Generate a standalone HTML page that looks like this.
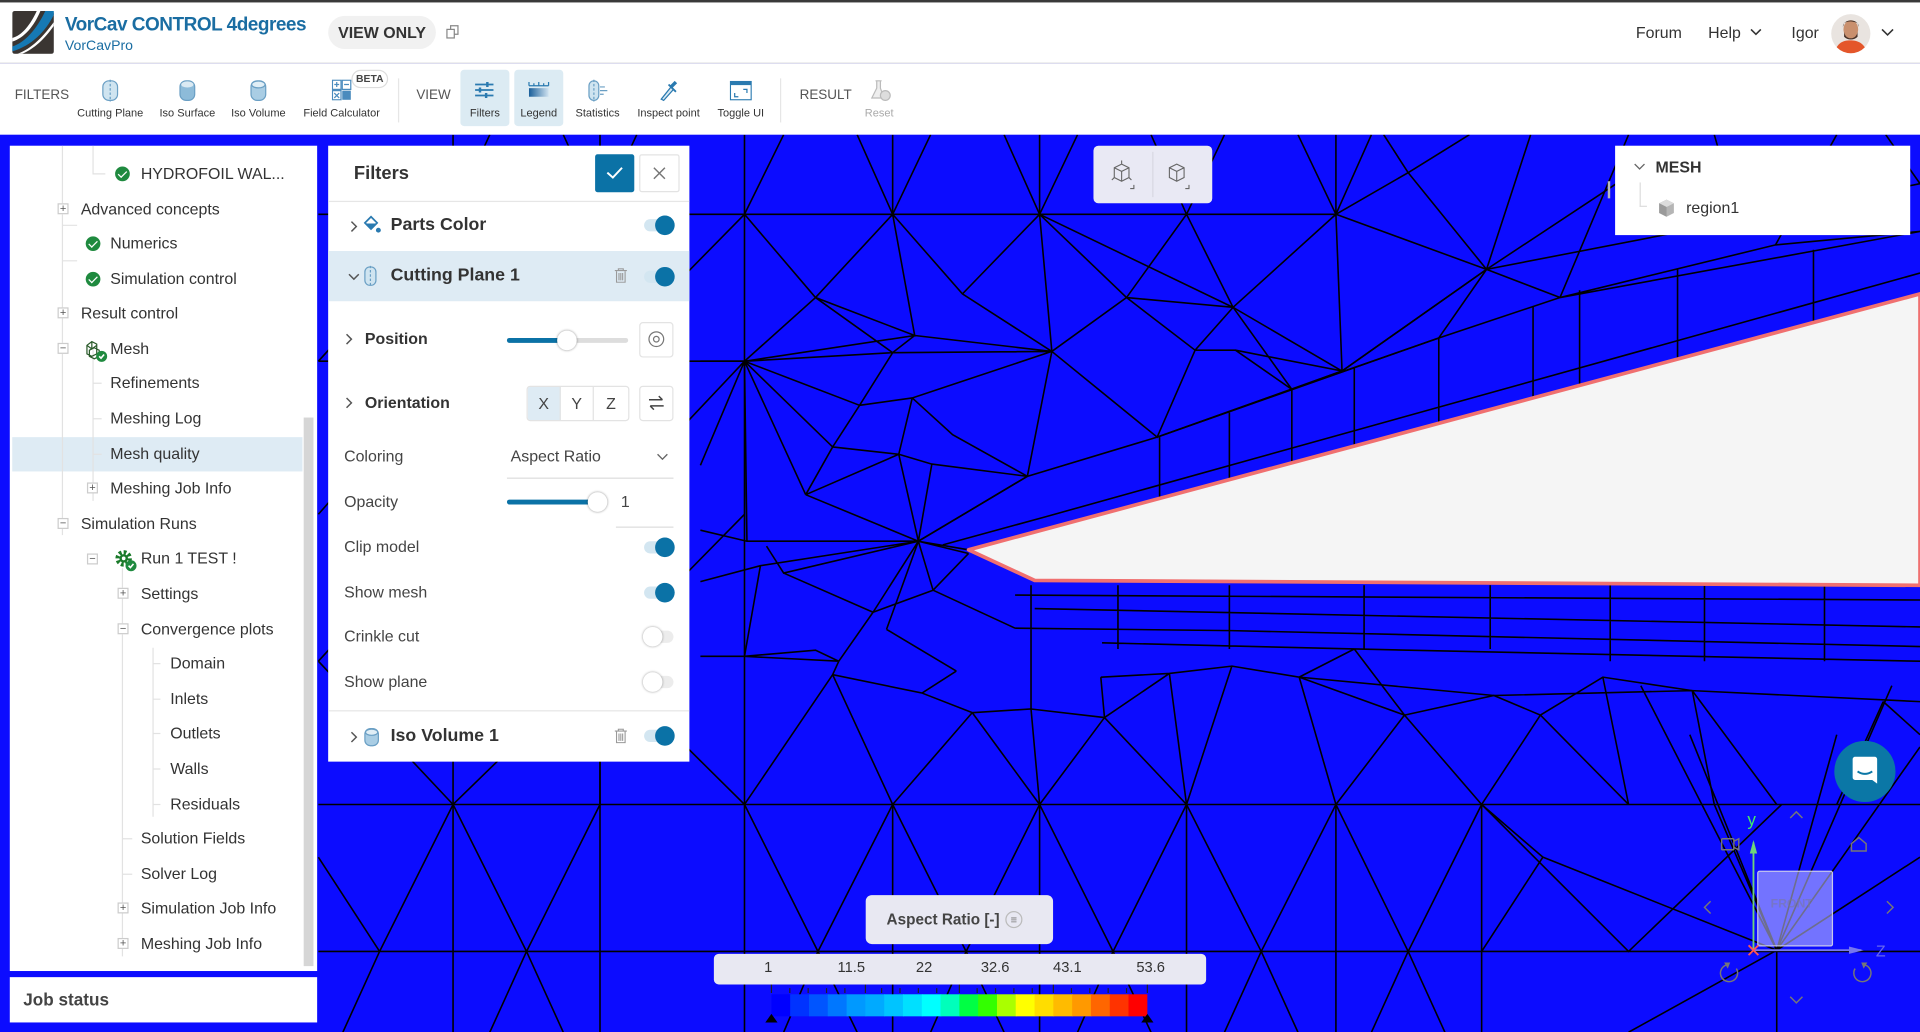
<!DOCTYPE html>
<html><head><meta charset="utf-8">
<style>
*{box-sizing:border-box;margin:0;padding:0}
html,body{width:1920px;height:1032px;overflow:hidden;background:#0c0cff;font-family:"Liberation Sans",sans-serif;color:#333}
#root{position:absolute;left:0;top:0;width:1568px;height:843px;transform:scale(1.22449);transform-origin:0 0;background:#0c0cff;overflow:hidden}
.abs{position:absolute}
.hdr{left:0;top:0;width:1568px;height:52px;background:#fff;border-top:2px solid #3a3a3a;border-bottom:1px solid #e2e2e2}
.tb{left:0;top:52px;width:1568px;height:58px;background:#fff}
.tl{position:absolute;font-size:9px;color:#333;text-align:center;white-space:nowrap;transform:translateX(-50%)}
.sec{position:absolute;font-size:11px;color:#555;top:20px}
.panel{background:#fff}
.tr{position:absolute;font-size:13px;color:#333;white-space:nowrap;line-height:16px}
.pl{position:absolute;width:9px;height:9px;border:1px solid #ccc;font-size:9px;line-height:7px;text-align:center;color:#555;background:#fff}
.chk{position:absolute;width:12px;height:12px;border-radius:50%;background:#1f8a3f}
.chk:after{content:"";position:absolute;left:3.5px;top:2px;width:3px;height:6px;border:solid #fff;border-width:0 1.6px 1.6px 0;transform:rotate(45deg)}
.fl{position:absolute;font-size:13px;color:#444;white-space:nowrap}
.fb{position:absolute;font-size:13px;font-weight:bold;color:#333;white-space:nowrap}
.tg{position:absolute;width:26px;height:20px}
.tg .t{position:absolute;left:1px;top:5px;width:24px;height:10px;border-radius:5px;background:#d3e6f1}
.tg .k{position:absolute;left:10px;top:2px;width:16px;height:16px;border-radius:50%;background:#0b72a6}
.tg.off .t{background:#ececec}
.tg.off .k{left:0;background:#fff;box-shadow:0 0 2px rgba(0,0,0,.4)}
.sep{position:absolute;top:12px;width:1px;height:36px;background:#e6e6e6}
</style></head><body><div id="root">

<svg class="abs" style="left:0;top:0" width="1568" height="843" viewBox="0 0 1568 843">
<rect x="0" y="110" width="1568" height="733" fill="#0c0cff"/>
<g stroke="#000" stroke-width="1.3" fill="none">
<path d="M260 175H1091M260 657H1568M260 777H1568"/>
<path d="M608 110V843M729 110V175M849 110V175M1091 110V175M729 657V843M849 657V843M969 657V843M1091 657V843M1210 657V843M370 110V843M490 110V843"/>
<path d="M608 175L640 110M729 175L700 110M729 175L760 110M849 175L820 110M849 175L880 110M1091 175L1060 110M1091 175L1120 110M969 175L940 110M969 175L1000 110M490 175L520 110M370 175L400 110M490 175L460 110"/>
<path d="M608 657L668 777L729 657L789 777L849 657L909 777L969 657L1030 777L1091 657L1150 777L1210 657L1330 777L1455 657M490 657L430 777L370 657L310 777L260 700M668 777L640 843M668 777L700 843M789 777L760 843M789 777L820 843M909 777L880 843M909 777L940 843M1030 777L1000 843M1030 777L1060 843M1150 777L1120 843M1150 777L1180 843M430 777L400 843M430 777L460 843M310 777L280 843"/>
<path d="M260 295L370 175L490 295L608 175M260 295H608M370 175V295M260 420L370 295L490 420L608 295M260 540L370 420L490 540L608 420M370 657L490 540L608 657M260 540L370 657M490 540V657"/>
<path d="M572 295H608L666 243L729 175M608 175L666 243L747 274L729 175L786 240L859 287L849 175L786 240M608 295L729 288L747 274M608 295L747 274M608 295L702 331L729 288L859 287L747 274M608 295L680 365M608 295L658 404M608 295L610 442M608 295L572 380M849 175L920 243L859 287M849 175L1007 251L969 175L920 243L1007 251L1091 175L1096 303L1007 251L976 286L920 243M976 286L1009 286L1055 318M976 286L945 357L859 287L839 389M859 287L745 325L702 331M666 243L729 288"/>
<path d="M745 325L778 355L839 389M745 325L734 371L680 365L702 331M734 371L761 379L839 389M658 404L734 371M658 404L750 442M680 365L658 404M572 433L610 442L750 442M734 371L750 442M761 379L750 442M839 389L750 442M572 475L621 462L750 442M626 446L640 468L750 442M640 468L713 500M621 462L608 536M750 442L713 500M750 442L724 514M750 442L762 482L713 500M762 482L829 513M713 500L685 540L608 536L666 531L685 540M724 514L781 548M685 540L680 551L753 566L781 548M753 566L794 582M680 551L608 657M680 551L729 657M794 582L729 657M794 582L842 579L849 657M794 582L849 657M842 579L902 586L849 657M902 586L969 657M572 536H608M750 442L791 449M750 442L791 452M762 482L791 452M1009 286L1096 303L1055 318L945 357M1091 175L1150 141L1214 220L1096 303M1150 141L1130 110M1150 141L1200 110M1214 220L1250 110M1214 220L1320 150M1274 243L1330 110M1274 243L1214 220M1175 276L1214 220M1055 318L1175 276M1091 175L1214 220M1007 251L1055 318"/>
<path d="M770 445L854 422L1568 223M750 442L839 389L945 357L1175 276L1274 243L1568 189M945 357L1096 303L1214 220L1420 180L1568 150M1274 243L1450 200L1568 189M1450 200L1500 110M1420 180L1400 110M1568 150L1540 110"/>
<path d="M947 426L947 357M1004 411L1004 337M1055 397L1055 318M1106 383L1106 300M1175 365L1175 276M1252 344L1252 250M1290 334L1290 237M1481 282L1481 204M1370 314L1370 220"/>
<path d="M829 486L1568 490M845 497L1568 512M829 513L1006 515L1568 528M900 525L1106 530L1568 540M1061 553L1220 568L1382 564L1568 573M913 478V530M1004 478V530M1114 478V530M1217 478V530M1315 478V540M1392 478V540M1490 478V540M842 478V579"/>
<path d="M899 553L955 550L1006 544L1061 553L1106 530M899 553L902 586L955 550M955 550L969 657M1006 544L1061 553L1147 584L1106 530M1147 584L1220 568L1258 584L1309 553L1382 564M1258 584L1210 657M1147 584L1210 657M1061 553L1091 657M1147 584L1091 657M1006 544L969 657M1309 553L1330 657M1258 584L1330 657M1382 564L1400 657M1538 573L1568 600M1538 573L1500 657M1382 564L1451 657"/>
<path d="M1451 776L1400 657M1451 776L1380 600M1451 776L1340 560M1451 776L1500 600M1451 776L1545 560M1451 776L1568 610M1451 776L1260 700M1451 776L1451 843M1451 776L1330 843M1451 776L1568 700M1260 700L1210 657M1260 700L1210 777"/>
</g>
<path d="M791 449L1568 240L1568 478L845 474Z" fill="#f5f5f5" stroke="#f07070" stroke-width="3" stroke-linejoin="round"/>
</svg>

<div class="abs hdr">
  <svg class="abs" style="left:10px;top:7px" width="34" height="35" viewBox="0 0 34 35">
    <rect width="34" height="35" rx="2" fill="#3a3532"/>
    <path d="M0 29C10 26 20 15 27 0H34V3C27 17 16 28 0 33Z" fill="#1679b4"/>
    <path d="M0 22C8 20 15 11 20 0H23C18 12 10 22 0 25Z" fill="#fff"/>
    <path d="M4 35C16 31 26 20 34 9V12C27 22 18 31 8 35Z" fill="#fff"/>
  </svg>
  <div class="abs" style="left:53px;top:10px;font-size:15.5px;letter-spacing:-0.4px;font-weight:bold;color:#1a6da2;white-space:nowrap">VorCav CONTROL 4degrees</div>
  <div class="abs" style="left:53px;top:30px;font-size:11.5px;color:#1a6da2">VorCavPro</div>
  <div class="abs" style="left:268px;top:11px;width:88px;height:27px;border-radius:14px;background:#f1f1f1;font-size:13px;font-weight:bold;color:#333;text-align:center;line-height:27px">VIEW ONLY</div>
  <svg class="abs" style="left:364px;top:18px" width="12" height="12" viewBox="0 0 12 12" fill="none" stroke="#888" stroke-width="1"><rect x="1" y="4" width="6" height="7"/><path d="M4 4V1H10V8H7"/></svg>
  <div class="abs" style="left:1336px;top:17px;font-size:13px;color:#333">Forum</div>
  <div class="abs" style="left:1395px;top:17px;font-size:13px;color:#333">Help</div>
  <svg class="abs" style="left:1429px;top:21px" width="10" height="7"><path d="M1 1L5 5L9 1" stroke="#333" stroke-width="1.3" fill="none"/></svg>
  <div class="abs" style="left:1463px;top:17px;font-size:13px;color:#333">Igor</div>
  <svg class="abs" style="left:1495px;top:9px" width="33" height="33" viewBox="0 0 33 33"><defs><clipPath id="cp"><circle cx="16.5" cy="16.5" r="16"/></clipPath></defs><g clip-path="url(#cp)"><rect width="33" height="33" fill="#e9e4e0"/><path d="M3 33C5 24 10 22 16 22S28 24 30 33Z" fill="#e4562a"/><ellipse cx="16.5" cy="13" rx="6" ry="7.5" fill="#c9906e"/><path d="M10 11C10 4 23 4 23 11L22 8C18 6 14 6 11 8Z" fill="#3b2a22"/><path d="M11 15C12 22 21 22 22 15L22 19C19 22 14 22 11 19Z" fill="#4a3328"/></g></svg>
  <svg class="abs" style="left:1536px;top:21px" width="11" height="7"><path d="M1 1L5.5 5.5L10 1" stroke="#333" stroke-width="1.3" fill="none"/></svg>
</div>

<div class="abs tb">
  <div class="sec" style="left:12px">FILTERS</div>
  <svg class="abs" style="left:82px;top:13px" width="16" height="18" viewBox="0 0 16 18"><rect x="2" y="1" width="12" height="16" rx="5" fill="#cfe4f0" stroke="#6a9fc4"/><path d="M8 0V18" stroke="#6a9fc4" stroke-dasharray="2 1.5"/></svg>
  <div class="tl" style="left:90px;top:35px">Cutting Plane</div>
  <svg class="abs" style="left:145px;top:13px" width="16" height="18" viewBox="0 0 16 18"><rect x="2" y="1" width="12" height="16" rx="5" fill="#8dbbd9" stroke="#6a9fc4"/><ellipse cx="8" cy="4" rx="5" ry="2.5" fill="#dbeaf3"/></svg>
  <div class="tl" style="left:153px;top:35px">Iso Surface</div>
  <svg class="abs" style="left:203px;top:13px" width="16" height="18" viewBox="0 0 16 18"><rect x="2" y="1" width="12" height="16" rx="5" fill="#a9cde4" stroke="#6a9fc4"/><ellipse cx="8" cy="4" rx="5.5" ry="2.8" fill="#e0eef6" stroke="#6a9fc4"/></svg>
  <div class="tl" style="left:211px;top:35px">Iso Volume</div>
  <svg class="abs" style="left:271px;top:13px" width="16" height="17" viewBox="0 0 16 17"><rect x="0.5" y="0.5" width="7" height="7.5" fill="#fff" stroke="#4a8bbd"/><rect x="8.5" y="0.5" width="7" height="7.5" fill="#fff" stroke="#4a8bbd"/><rect x="0.5" y="9" width="7" height="7.5" fill="#fff" stroke="#4a8bbd"/><rect x="8.5" y="9" width="7" height="7.5" fill="#4a8bbd"/><path d="M2 4H6M4 2V6M10 4H14M2 11L6 15M6 11L2 15" stroke="#4a8bbd"/></svg>
  <div class="abs" style="left:287px;top:5px;width:30px;height:15px;border:1px solid #ddd;border-radius:8px;background:#fff;font-size:8.5px;font-weight:bold;color:#444;text-align:center;line-height:13px">BETA</div>
  <div class="tl" style="left:279px;top:35px">Field Calculator</div>
  <div class="sep" style="left:325px"></div>
  <div class="sec" style="left:340px">VIEW</div>
  <div class="abs" style="left:376px;top:5px;width:40px;height:46px;background:#dcebf3;border-radius:3px"></div>
  <svg class="abs" style="left:387px;top:14px" width="17" height="15" viewBox="0 0 17 15" stroke="#2a7ab0" stroke-width="1.5"><path d="M1 3H16M1 7.5H16M1 12H16"/><path d="M11 1V5M5 5.5V9.5M10 10V14" stroke-width="2"/></svg>
  <div class="tl" style="left:396px;top:35px">Filters</div>
  <div class="abs" style="left:420px;top:5px;width:40px;height:46px;background:#dcebf3;border-radius:3px"></div>
  <svg class="abs" style="left:431px;top:14px" width="18" height="14" viewBox="0 0 18 14"><path d="M1 1V4M5 2V4M9 1V4M13 2V4M17 1V4M1 4H17" stroke="#2a7ab0" stroke-width="1"/><rect x="1" y="6" width="16" height="7" fill="url(#lg1)"/><defs><linearGradient id="lg1"><stop offset="0" stop-color="#1a5f9a"/><stop offset="1" stop-color="#cfe2f0"/></linearGradient></defs></svg>
  <div class="tl" style="left:440px;top:35px">Legend</div>
  <svg class="abs" style="left:480px;top:13px" width="17" height="18" viewBox="0 0 17 18"><rect x="1" y="1" width="8" height="16" rx="4" fill="#cfe4f0" stroke="#6a9fc4"/><path d="M5 0V18" stroke="#6a9fc4" stroke-dasharray="2 1.5"/><path d="M10 6H14M10 9H16M10 12H13" stroke="#6a9fc4"/></svg>
  <div class="tl" style="left:488px;top:35px">Statistics</div>
  <svg class="abs" style="left:538px;top:13px" width="16" height="18" viewBox="0 0 16 18"><path d="M2 16L10 6L12 8L4 17Z" fill="#dbeaf3" stroke="#2a7ab0"/><path d="M9 5L13 1L15 3L11 7Z" fill="#2a7ab0"/><path d="M8 4L14 10" stroke="#2a7ab0" stroke-width="1.5"/></svg>
  <div class="tl" style="left:546px;top:35px">Inspect point</div>
  <svg class="abs" style="left:596px;top:14px" width="18" height="16" viewBox="0 0 18 16"><rect x="0.5" y="0.5" width="17" height="15" fill="#fff" stroke="#2a7ab0"/><rect x="0.5" y="0.5" width="17" height="3" fill="#2a7ab0"/><path d="M4 10V13H7M14 10V7H11" stroke="#2a7ab0" fill="none"/></svg>
  <div class="tl" style="left:605px;top:35px">Toggle UI</div>
  <div class="sep" style="left:637px"></div>
  <div class="sec" style="left:653px">RESULT</div>
  <svg class="abs" style="left:710px;top:13px" width="18" height="18" viewBox="0 0 18 18"><path d="M5 1H10M6 1V7L2 15H12L9 7V1" fill="#eee" stroke="#bbb"/><circle cx="13" cy="13" r="4" fill="#ddd" stroke="#bbb"/></svg>
  <div class="tl" style="left:718px;top:35px;color:#aaa">Reset</div>
</div>

<div class="abs panel" style="left:8px;top:119px;width:251px;height:674px">
  <div class="abs" style="left:2px;top:238px;width:237px;height:28px;background:#deebf4"></div>
  <div class="abs" style="left:240px;top:222px;width:8px;height:448px;background:#d6d6d6"></div>
  <svg class="abs" style="left:0;top:0" width="240" height="674"><g stroke="#e2e2e2" stroke-width="1" fill="none">
    <path d="M43 0V318M68 0V23H78M68 166V290M68 194H75M68 223H75M68 252H75M92 345V662M92 480V662M117 410V548M117 423H123M117 452H123M117 480H123M117 509H123M117 538H123M92 566H100M92 595H100M43 65H55M43 94H55"/>
  </g></svg>
  <div class="chk" style="left:86px;top:17px"></div><div class="tr" style="left:107px;top:15px">HYDROFOIL WAL...</div>
  <div class="pl" style="left:39px;top:47px">+</div><div class="tr" style="left:58px;top:44px">Advanced concepts</div>
  <div class="chk" style="left:62px;top:74px"></div><div class="tr" style="left:82px;top:72px">Numerics</div>
  <div class="chk" style="left:62px;top:103px"></div><div class="tr" style="left:82px;top:101px">Simulation control</div>
  <div class="pl" style="left:39px;top:132px">+</div><div class="tr" style="left:58px;top:129px">Result control</div>
  <div class="pl" style="left:39px;top:161px">−</div>
  <svg class="abs" style="left:60px;top:157px" width="20" height="20" viewBox="0 0 20 20"><path d="M3 6L7 3L11 5V13L7 15L3 13ZM7 3V9M3 6L7 9L11 6M5 10L9 8L13 10V15L9 17L5 15Z" stroke="#2a5a2a" fill="none" stroke-width="1"/><circle cx="15" cy="15" r="4.5" fill="#1f8a3f"/><path d="M13 15L14.5 16.5L17 13.5" stroke="#fff" stroke-width="1.3" fill="none"/></svg>
  <div class="tr" style="left:82px;top:158px">Mesh</div>
  <div class="tr" style="left:82px;top:186px">Refinements</div>
  <div class="tr" style="left:82px;top:215px">Meshing Log</div>
  <div class="tr" style="left:82px;top:244px">Mesh quality</div>
  <div class="pl" style="left:63px;top:275px">+</div><div class="tr" style="left:82px;top:272px">Meshing Job Info</div>
  <div class="pl" style="left:39px;top:304px">−</div><div class="tr" style="left:58px;top:301px">Simulation Runs</div>
  <div class="pl" style="left:63px;top:333px">−</div>
  <svg class="abs" style="left:84px;top:328px" width="20" height="20" viewBox="0 0 20 20"><circle cx="9" cy="9" r="5" fill="none" stroke="#1a7a2a" stroke-width="3.5" stroke-dasharray="2.2 1.7"/><circle cx="9" cy="9" r="3.5" fill="#1a7a2a"/><circle cx="9" cy="9" r="1.5" fill="#fff"/><circle cx="15" cy="15" r="4.5" fill="#1f8a3f"/><path d="M13 15L14.5 16.5L17 13.5" stroke="#fff" stroke-width="1.3" fill="none"/></svg>
  <div class="tr" style="left:107px;top:329px">Run 1 TEST !</div>
  <div class="pl" style="left:88px;top:361px">+</div><div class="tr" style="left:107px;top:358px">Settings</div>
  <div class="pl" style="left:88px;top:390px">−</div><div class="tr" style="left:107px;top:387px">Convergence plots</div>
  <div class="tr" style="left:131px;top:415px">Domain</div>
  <div class="tr" style="left:131px;top:444px">Inlets</div>
  <div class="tr" style="left:131px;top:472px">Outlets</div>
  <div class="tr" style="left:131px;top:501px">Walls</div>
  <div class="tr" style="left:131px;top:530px">Residuals</div>
  <div class="tr" style="left:107px;top:558px">Solution Fields</div>
  <div class="tr" style="left:107px;top:587px">Solver Log</div>
  <div class="pl" style="left:88px;top:618px">+</div><div class="tr" style="left:107px;top:615px">Simulation Job Info</div>
  <div class="pl" style="left:88px;top:647px">+</div><div class="tr" style="left:107px;top:644px">Meshing Job Info</div>
</div>
<div class="abs panel" style="left:8px;top:798px;width:251px;height:37px">
  <div class="abs" style="left:11px;top:10px;font-size:14px;font-weight:bold;color:#444">Job status</div>
</div>

<div class="abs panel" style="left:268px;top:119px;width:295px;height:503px">
  <div class="abs" style="left:21px;top:14px;font-size:15px;font-weight:bold;color:#333">Filters</div>
  <div class="abs" style="left:218px;top:7px;width:32px;height:31px;background:#0b72a6;border-radius:2px"></div>
  <svg class="abs" style="left:226px;top:15px" width="16" height="14"><path d="M2 7L6.5 11L14 3" stroke="#fff" stroke-width="1.6" fill="none"/></svg>
  <div class="abs" style="left:254px;top:7px;width:33px;height:31px;border:1px solid #e3e3e3;border-radius:2px"></div>
  <svg class="abs" style="left:265px;top:17px" width="11" height="11"><path d="M1 1L10 10M10 1L1 10" stroke="#777" stroke-width="1.2"/></svg>
  <div class="abs" style="left:0;top:45px;width:295px;height:1px;background:#e6e6e6"></div>
  <svg class="abs" style="left:18px;top:61px" width="6" height="10"><path d="M1 1L5 5L1 9" stroke="#555" stroke-width="1.2" fill="none"/></svg>
  <svg class="abs" style="left:28px;top:57px" width="16" height="16" viewBox="0 0 16 16"><path d="M2 6L7 1L12 6L7 11Z" fill="#fff" stroke="#2a7ab0" stroke-width="1.4"/><path d="M2.5 6.5H11.5L7 11Z" fill="#2a7ab0"/><circle cx="13" cy="12" r="2" fill="#2a7ab0"/></svg>
  <div class="fb" style="left:51px;top:57px;font-size:14.5px">Parts Color</div>
  <div class="tg" style="left:257px;top:55px"><div class="t"></div><div class="k"></div></div>
  <div class="abs" style="left:0;top:86px;width:295px;height:41px;background:#deebf4"></div>
  <svg class="abs" style="left:16px;top:104px" width="10" height="6"><path d="M1 1L5 5L9 1" stroke="#555" stroke-width="1.2" fill="none"/></svg>
  <svg class="abs" style="left:29px;top:98px" width="11" height="17" viewBox="0 0 11 17"><rect x="1" y="1" width="9" height="15" rx="4" fill="#cfe4f0" stroke="#6a9fc4"/><path d="M5.5 0V17" stroke="#6a9fc4" stroke-dasharray="2 1.5"/></svg>
  <div class="fb" style="left:51px;top:98px;font-size:14.5px">Cutting Plane 1</div>
  <svg class="abs" style="left:234px;top:100px" width="10" height="12" viewBox="0 0 10 12"><path d="M0 2H10M3 2V0.5H7V2M1.5 2.5V11.5H8.5V2.5M3.5 4V10M5 4V10M6.5 4V10" stroke="#999" fill="none" stroke-width="0.9"/></svg>
  <div class="tg" style="left:257px;top:97px"><div class="t"></div><div class="k"></div></div>

  <svg class="abs" style="left:14px;top:153px" width="6" height="10"><path d="M1 1L5 5L1 9" stroke="#555" stroke-width="1.2" fill="none"/></svg>
  <div class="fb" style="left:30px;top:150px">Position</div>
  <div class="abs" style="left:146px;top:157px;width:99px;height:4px;background:#ddd;border-radius:2px"></div>
  <div class="abs" style="left:146px;top:157px;width:49px;height:4px;background:#0b72a6;border-radius:2px"></div>
  <div class="abs" style="left:187px;top:151px;width:16px;height:16px;border-radius:50%;background:#fff;box-shadow:0 0 2px rgba(0,0,0,.45)"></div>
  <div class="abs" style="left:254px;top:144px;width:28px;height:29px;border:1px solid #e3e3e3;border-radius:3px"></div>
  <svg class="abs" style="left:261px;top:151px" width="14" height="14"><circle cx="7" cy="7" r="6" stroke="#777" fill="none"/><circle cx="7" cy="7" r="2.3" stroke="#777" fill="none"/></svg>

  <svg class="abs" style="left:14px;top:205px" width="6" height="10"><path d="M1 1L5 5L1 9" stroke="#555" stroke-width="1.2" fill="none"/></svg>
  <div class="fb" style="left:30px;top:202px">Orientation</div>
  <div class="abs" style="left:162px;top:196px;width:84px;height:29px;border:1px solid #e3e3e3;border-radius:3px;overflow:hidden;font-size:13px;color:#444">
    <div class="abs" style="left:0;top:0;width:27px;height:27px;background:#deebf4;border-right:1px solid #e3e3e3;text-align:center;line-height:27px">X</div>
    <div class="abs" style="left:27px;top:0;width:27px;height:27px;border-right:1px solid #e3e3e3;text-align:center;line-height:27px">Y</div>
    <div class="abs" style="left:54px;top:0;width:28px;height:27px;text-align:center;line-height:27px">Z</div>
  </div>
  <div class="abs" style="left:254px;top:196px;width:28px;height:29px;border:1px solid #e3e3e3;border-radius:3px"></div>
  <svg class="abs" style="left:261px;top:203px" width="14" height="14"><path d="M1 4.5H12M9 1.5L12 4.5M13 9.5H2M5 12.5L2 9.5" stroke="#444" stroke-width="1.2" fill="none"/></svg>

  <div class="fl" style="left:13px;top:246px">Coloring</div>
  <div class="fl" style="left:149px;top:246px">Aspect Ratio</div>
  <svg class="abs" style="left:268px;top:251px" width="10" height="6"><path d="M1 1L5 5L9 1" stroke="#666" stroke-width="1.1" fill="none"/></svg>
  <div class="abs" style="left:146px;top:271px;width:136px;height:1px;background:#ddd"></div>
  <div class="fl" style="left:13px;top:283px">Opacity</div>
  <div class="abs" style="left:146px;top:289px;width:74px;height:4px;background:#0b72a6;border-radius:2px"></div>
  <div class="abs" style="left:212px;top:283px;width:16px;height:16px;border-radius:50%;background:#fff;box-shadow:0 0 2px rgba(0,0,0,.45)"></div>
  <div class="fl" style="left:239px;top:283px">1</div>
  <div class="abs" style="left:235px;top:311px;width:47px;height:1px;background:#ddd"></div>
  <div class="fl" style="left:13px;top:320px">Clip model</div>
  <div class="tg" style="left:257px;top:318px"><div class="t"></div><div class="k"></div></div>
  <div class="fl" style="left:13px;top:357px">Show mesh</div>
  <div class="tg" style="left:257px;top:355px"><div class="t"></div><div class="k"></div></div>
  <div class="fl" style="left:13px;top:393px">Crinkle cut</div>
  <div class="tg off" style="left:257px;top:391px"><div class="t"></div><div class="k"></div></div>
  <div class="fl" style="left:13px;top:430px">Show plane</div>
  <div class="tg off" style="left:257px;top:428px"><div class="t"></div><div class="k"></div></div>
  <div class="abs" style="left:0;top:461px;width:295px;height:1px;background:#e6e6e6"></div>
  <svg class="abs" style="left:18px;top:478px" width="6" height="10"><path d="M1 1L5 5L1 9" stroke="#555" stroke-width="1.2" fill="none"/></svg>
  <svg class="abs" style="left:29px;top:475px" width="13" height="16" viewBox="0 0 13 16"><rect x="1" y="1" width="11" height="14" rx="4.5" fill="#a9cde4" stroke="#6a9fc4"/><ellipse cx="6.5" cy="4" rx="5" ry="2.5" fill="#e0eef6" stroke="#6a9fc4"/></svg>
  <div class="fb" style="left:51px;top:474px;font-size:14.5px">Iso Volume 1</div>
  <svg class="abs" style="left:234px;top:476px" width="10" height="12" viewBox="0 0 10 12"><path d="M0 2H10M3 2V0.5H7V2M1.5 2.5V11.5H8.5V2.5M3.5 4V10M5 4V10M6.5 4V10" stroke="#999" fill="none" stroke-width="0.9"/></svg>
  <div class="tg" style="left:257px;top:472px"><div class="t"></div><div class="k"></div></div>
</div>

<div class="abs" style="left:893px;top:119px;width:97px;height:47px;background:#e9e9f4;border-radius:4px"></div>
<div class="abs" style="left:941px;top:124px;width:1px;height:37px;background:#d8d8e2"></div>
<svg class="abs" style="left:906px;top:131px" width="24" height="26" viewBox="0 0 24 26" fill="none" stroke="#666" stroke-width="0.9"><path d="M10 3L16 6V14L10 17L4 14V6ZM4 6L10 9L16 6M10 9V17M10 0V3M4 14L2 16M16 14L18 16M20 20V23H17"/></svg>
<svg class="abs" style="left:951px;top:131px" width="24" height="26" viewBox="0 0 24 26" fill="none" stroke="#666" stroke-width="0.9"><path d="M10 3L16 6V14L10 17L4 14V6ZM4 6L10 9L16 6M10 9V17M20 20V23H17"/></svg>

<div class="abs" style="left:1313px;top:148px;width:2px;height:14px;border-left:1px solid #bbb;border-right:1px solid #bbb"></div>
<div class="abs panel" style="left:1319px;top:119px;width:241px;height:73px">
  <svg class="abs" style="left:15px;top:14px" width="10" height="7"><path d="M1 1L5 5L9 1" stroke="#666" stroke-width="1.1" fill="none"/></svg>
  <div class="abs" style="left:33px;top:10px;font-size:13px;color:#333;font-weight:bold">MESH</div>
  <div class="abs" style="left:20px;top:30px;width:6px;height:20px;border-left:1px solid #ddd;border-bottom:1px solid #ddd"></div>
  <svg class="abs" style="left:35px;top:43px" width="14" height="16" viewBox="0 0 14 16"><path d="M7 1L13 4V12L7 15L1 12V4Z" fill="#b5b5b5"/><path d="M1 4L7 7L13 4L7 1Z" fill="#dcdcdc"/><path d="M7 7V15L1 12V4Z" fill="#9a9a9a"/></svg>
  <div class="abs" style="left:58px;top:43px;font-size:13px;color:#333">region1</div>
</div>

<div class="abs" style="left:1498px;top:605px;width:50px;height:50px;border-radius:50%;background:#0b77a6"></div>
<svg class="abs" style="left:1512px;top:617px" width="22" height="26" viewBox="0 0 22 26"><path d="M3 1H19A2 2 0 0 1 21 3V23L17 20H3A2 2 0 0 1 1 18V3A2 2 0 0 1 3 1Z" fill="#fff"/><path d="M5 13Q11 17 17 13" stroke="#0b77a6" stroke-width="1.6" fill="none"/></svg>

<div class="abs" style="left:1435px;top:711px;width:62px;height:62px;background:rgba(200,200,255,.55);border:1px solid rgba(220,220,230,.8);border-radius:2px"></div>
<div class="abs" style="left:1446px;top:733px;font-size:10px;color:rgba(120,120,160,.6);font-weight:bold">FRONT</div>
<svg class="abs" style="left:1380px;top:655px" width="170" height="180" viewBox="0 0 170 180" fill="none">
  <path d="M52 121V33" stroke="#6fd47a" stroke-width="1.5"/><path d="M49 42L52 31L55 42Z" fill="#6fd47a"/>
  <text x="47" y="19" font-size="14" fill="#44ee66" font-family="Liberation Sans">y</text>
  <path d="M52 121H140" stroke="#7777ee" stroke-width="1.5"/><path d="M130 118L142 121L130 124Z" fill="#7777ee"/>
  <text x="152" y="126" font-size="13" fill="#6666ee" font-family="Liberation Sans">Z</text>
  <path d="M48 117L56 125M56 117L48 125" stroke="#ff5555" stroke-width="1.5"/>
  <g stroke="#777" stroke-width="1.2"><path d="M82 13L87 8L92 13M82 159L87 164L92 159M17 81L12 86L17 91M161 81L166 86L161 91"/>
  <rect x="26" y="30" width="10" height="9" rx="1"/><path d="M36 32L40 30V39L36 37"/><path d="M132 40V34L138 29L144 34V40Z"/>
  <path d="M30 133A7 7 0 1 0 38 136"/><path d="M143 133A7 7 0 1 1 135 136"/></g>
  <path d="M28 131L31 136L33 131Z" fill="#777"/><path d="M145 131L142 136L140 131Z" fill="#777"/>
</svg>

<div class="abs" style="left:707px;top:731px;width:153px;height:40px;background:#e8e8f2;border-radius:5px"></div>
<div class="abs" style="left:724px;top:744px;font-size:12.5px;font-weight:bold;color:#444;white-space:nowrap">Aspect Ratio [-]</div>
<div class="abs" style="left:821px;top:744px;width:14px;height:14px;border-radius:50%;border:1px solid #bbb;font-size:9px;text-align:center;line-height:12px;color:#777;background:#e8e8f2">≡</div>
<div class="abs" style="left:583px;top:779px;width:402px;height:25px;background:#e8e8f2;border-radius:4px"></div>
<div class="abs" style="left:583px;top:783px;width:402px;font-size:12px;color:#333">
  <span class="abs" style="left:41px">1</span><span class="abs" style="left:101px">11.5</span><span class="abs" style="left:165px">22</span><span class="abs" style="left:218px">32.6</span><span class="abs" style="left:277px">43.1</span><span class="abs" style="left:345px">53.6</span>
</div>
<svg class="abs" style="left:620px;top:803px" width="330" height="34" viewBox="0 0 330 34">
  <g stroke="#222" stroke-width="1"><path d="M10 1V8M86.75 1V8M163.5 1V8M240.25 1V8M317 1V8"/><path d="M25 4V8M40 4V8M55 4V8M70 4V8M100 4V8M115 4V8M130 4V8M145 4V8M178 4V8M193 4V8M208 4V8M223 4V8M255 4V8M270 4V8M285 4V8M300 4V8"/></g>
  <g>
  <rect x="10" y="9" width="16" height="18" fill="#0000ff"/><rect x="25.3" y="9" width="16" height="18" fill="#0033ff"/><rect x="40.7" y="9" width="16" height="18" fill="#0055ff"/><rect x="56" y="9" width="16" height="18" fill="#0077ff"/><rect x="71.4" y="9" width="16" height="18" fill="#0099ff"/><rect x="86.7" y="9" width="16" height="18" fill="#00aaff"/><rect x="102.1" y="9" width="16" height="18" fill="#00c4ff"/><rect x="117.4" y="9" width="16" height="18" fill="#00e0ff"/><rect x="132.8" y="9" width="16" height="18" fill="#00ffff"/><rect x="148.1" y="9" width="16" height="18" fill="#00ffbb"/><rect x="163.5" y="9" width="16" height="18" fill="#00ff44"/><rect x="178.8" y="9" width="16" height="18" fill="#33ff00"/><rect x="194.2" y="9" width="16" height="18" fill="#aaff00"/><rect x="209.5" y="9" width="16" height="18" fill="#ffff00"/><rect x="224.9" y="9" width="16" height="18" fill="#ffdd00"/><rect x="240.2" y="9" width="16" height="18" fill="#ffbb00"/><rect x="255.6" y="9" width="16" height="18" fill="#ff9900"/><rect x="270.9" y="9" width="16" height="18" fill="#ff6600"/><rect x="286.3" y="9" width="16" height="18" fill="#ff3300"/><rect x="301.6" y="9" width="15.4" height="18" fill="#ff0000"/>
  </g>
  <path d="M5 32L10 25L15 32Z M312 32L317 25L322 32Z" fill="#000"/>
</svg>
</div></body></html>
